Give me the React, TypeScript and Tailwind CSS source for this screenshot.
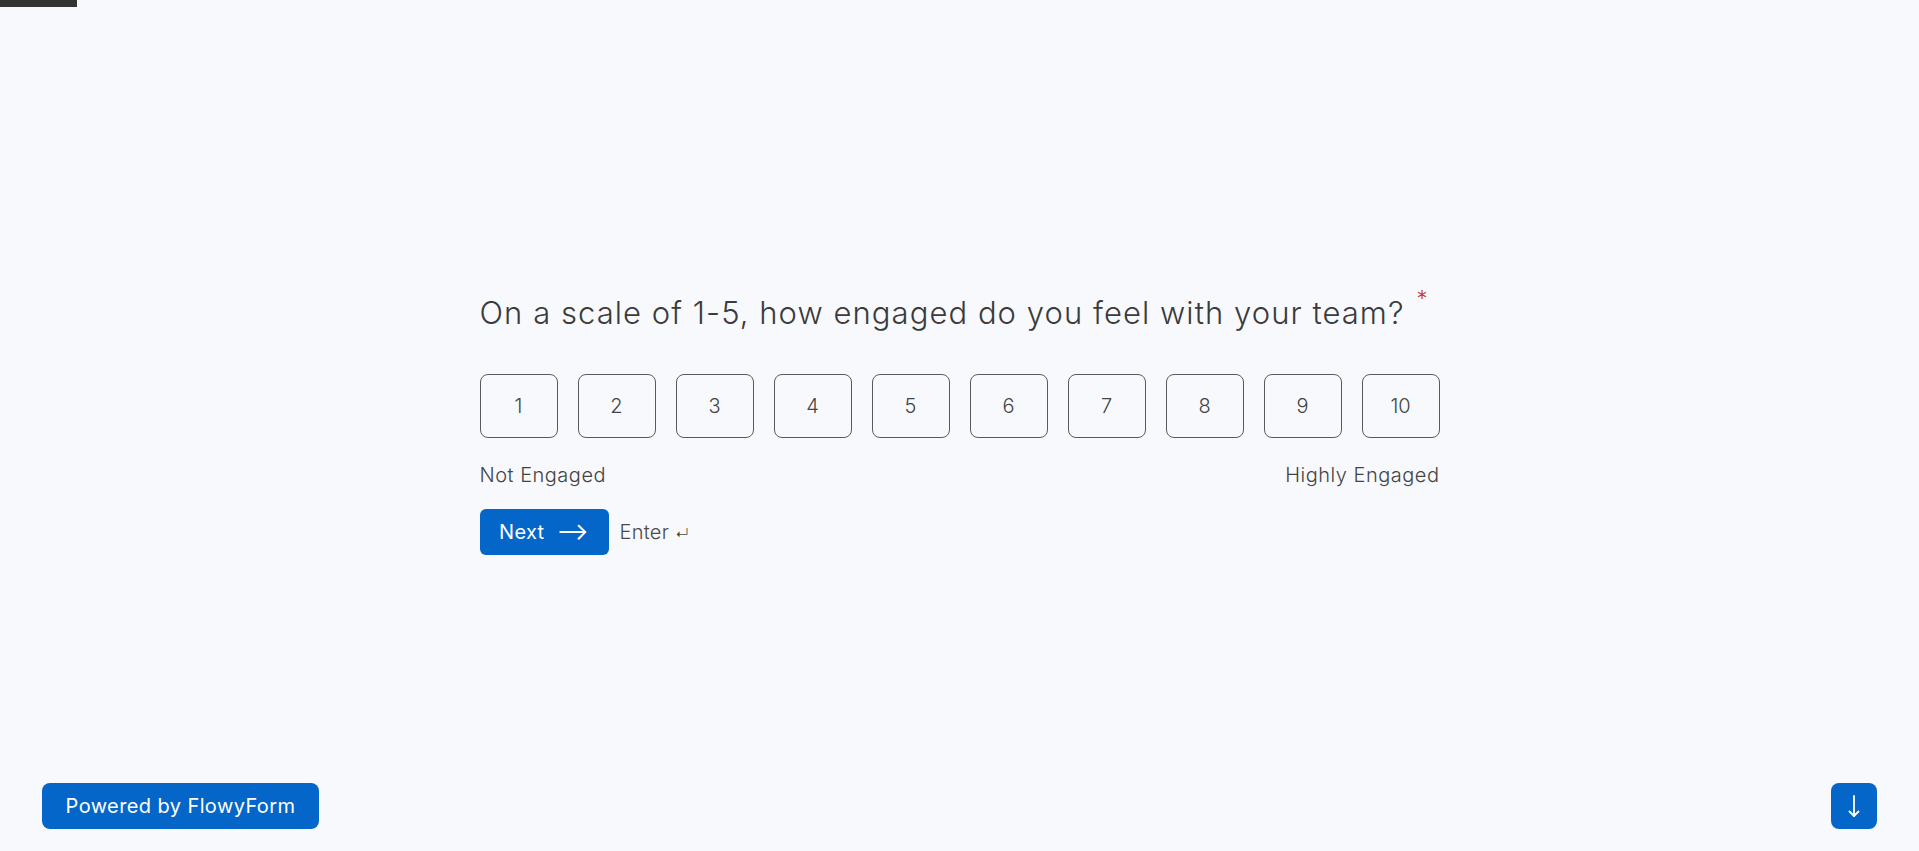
const scale = [1, 2, 3, 4, 5, 6, 7, 8, 9, 10];

export default function App() {
  return (
    <div
      className="relative h-screen w-full bg-[#f8f9fd] flex flex-col text-[#3a3a3a]"
      style={{ fontFamily: "Inter, 'Noto Sans', sans-serif" }}
    >
      {/* progress */}
      <div className="absolute top-0 left-0 h-[7px] w-[77px] bg-[#333333]" />

      <main className="flex-1 flex items-center justify-center pt-[63px]">
        <div className="w-[960px] flex flex-col">
          <h1 className="text-[31px] font-light leading-[44px] text-[#3b3b3b] tracking-[1.05px]">
            On a scale of 1-5, how engaged do you feel with your team?
            <sup className="text-[#c0392b] text-[22px] ml-[12px] relative -top-[18px]">*</sup>
          </h1>

          <div className="mt-[39px] grid grid-cols-10 gap-[20px]">
            {scale.map((n) => (
              <button
                key={n}
                className="h-[64px] rounded-[8px] border border-[#5a5a5a] flex items-center justify-center text-[20px] font-light text-[#444]"
              >
                {n}
              </button>
            ))}
          </div>

          <div className="mt-[22px] flex justify-between text-[20px] font-light text-[#444] tracking-[0.5px]">
            <span>Not Engaged</span>
            <span>Highly Engaged</span>
          </div>

          <div className="mt-[19px] flex items-center gap-[11px]">
            <button className="h-[46px] w-[129px] rounded-[6px] bg-[#0466c8] text-white text-[20px] flex items-center justify-center gap-[12px] tracking-[0.3px]">
              <span>Next</span>
              <span className="text-[24px] leading-none">⟶</span>
            </button>
            <span className="text-[20px] font-light text-[#4a4a4a] tracking-[0.3px]">
              Enter <span className="text-[14px]">↵</span>
            </span>
          </div>
        </div>
      </main>

      <footer className="flex items-center justify-between px-[42px] pb-[22px]">
        <div className="h-[46px] w-[277px] rounded-[8px] bg-[#0466c8] text-white text-[20px] tracking-[0.4px] flex items-center justify-center">
          Powered by FlowyForm
        </div>
        <button className="h-[46px] w-[46px] rounded-[8px] bg-[#0466c8] text-white flex items-center justify-center">
          <svg width="24" height="26" viewBox="0 0 24 26" fill="none" stroke="currentColor" strokeWidth="1.8" strokeLinecap="round" strokeLinejoin="round">
            <path d="M12 3 V23" />
            <path d="M7.5 18.5 L12 23 L16.5 18.5" />
          </svg>
        </button>
      </footer>
    </div>
  );
}
